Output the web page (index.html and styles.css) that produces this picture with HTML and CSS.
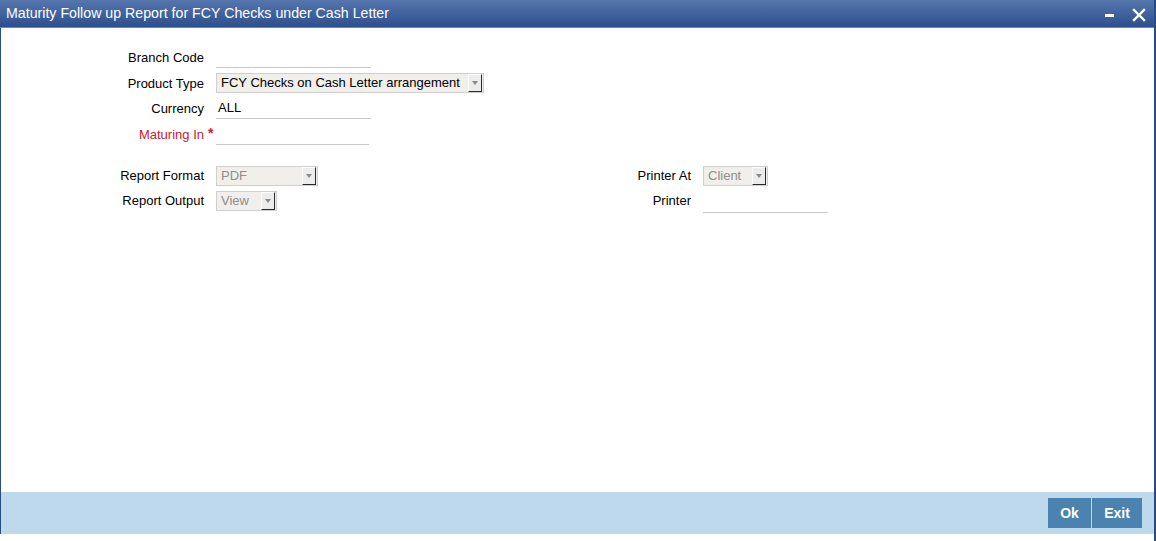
FILE: index.html
```html
<!DOCTYPE html>
<html>
<head>
<meta charset="utf-8">
<link rel="stylesheet" href="styles.css">
</head>
<body>
<div class="window">
  <div class="titlebar">
    <span class="title">Maturity Follow up Report for FCY Checks under Cash Letter</span>
    <div class="controls">
      <svg class="ctl" width="12" height="12" viewBox="0 0 12 12"><rect x="1" y="5" width="9" height="3" fill="#fff"/></svg>
      <svg class="ctl" width="14" height="14" viewBox="0 0 14 14"><path d="M2 2 L12 12 M12 2 L2 12" stroke="#fff" stroke-width="2.4" stroke-linecap="square"/></svg>
    </div>
  </div>
  <div class="content">
    <div class="form-top">
      <label class="lbl">Branch Code</label>
      <div class="field"><div class="text-input w155"></div></div>

      <label class="lbl">Product Type</label>
      <div class="field">
        <div class="select w268"><span class="sel-text">FCY Checks on Cash Letter arrangement</span><span class="arrow"><i></i></span></div>
      </div>

      <label class="lbl">Currency</label>
      <div class="field"><div class="text-input w155">ALL</div></div>

      <label class="lbl req">Maturing In<span class="star">*</span></label>
      <div class="field"><div class="text-input w153"></div></div>
    </div>

    <div class="form-bottom">
      <label class="lbl">Report Format</label>
      <div class="field">
        <div class="select disabled w102"><span class="sel-text">PDF</span><span class="arrow"><i></i></span></div>
      </div>
      <label class="lbl">Printer At</label>
      <div class="field">
        <div class="select disabled w65"><span class="sel-text">Client</span><span class="arrow"><i></i></span></div>
      </div>

      <label class="lbl">Report Output</label>
      <div class="field">
        <div class="select disabled w61"><span class="sel-text">View</span><span class="arrow"><i></i></span></div>
      </div>
      <label class="lbl">Printer</label>
      <div class="field"><div class="text-input w125"></div></div>
    </div>
  </div>
  <div class="footer">
    <button class="btn ok">Ok</button>
    <button class="btn exit">Exit</button>
  </div>
</div>
</body>
</html>
```

FILE: styles.css
```css
html, body {
  margin: 0;
  padding: 0;
  background: #ffffff;
}
body {
  font-family: "Liberation Sans", Arial, sans-serif;
  font-size: 13px;
  color: #000;
}
.window {
  width: 1156px;
  height: 541px;
  box-sizing: border-box;
  display: flex;
  flex-direction: column;
  border-right: 2px solid #2a4c86;
}
.titlebar {
  height: 27px;
  border-bottom: 1px solid #6f87ab;
  background: linear-gradient(#5676ae, #2d4f8e);
  display: flex;
  align-items: center;
  justify-content: space-between;
  padding-left: 6px;
  padding-right: 8px;
}
.title {
  color: #ffffff;
  font-size: 14.2px;
  margin-top: -1px;
}
.controls {
  display: flex;
  align-items: center;
  gap: 16px;
  margin-top: 2px;
}
.ctl { display: block; }
.content {
  flex: 1;
  border-left: 1px solid #2a4c86;
  padding-top: 19px;
}
.form-top {
  display: grid;
  grid-template-columns: 203px 300px;
  column-gap: 12px;
  row-gap: 4.5px;
  grid-auto-rows: 21px;
}
.form-bottom {
  display: grid;
  grid-template-columns: 203px 300px 163px 1fr;
  column-gap: 12px;
  grid-auto-rows: 20px;
  row-gap: 5px;
  margin-top: 21px;
}
.lbl {
  text-align: right;
  align-self: center;
  white-space: nowrap;
  line-height: 15px;
}
.lbl.req { color: #d0202b; }
.star {
  display: inline-block;
  width: 0;
  margin-left: 4px;
  margin-right: -4px;
  color: #d0202b;
  font-size: 14px;
  font-weight: bold;
  vertical-align: top;
  line-height: 13px;
}
.field {
  display: flex;
  align-items: flex-start;
}
.text-input {
  box-sizing: border-box;
  height: 21px;
  border-bottom: 1px solid #c8c8c8;
  padding-left: 2px;
  line-height: 19px;
}
.form-bottom .text-input { height: 22px; line-height: 20px; }
.w155 { width: 155px; }
.w153 { width: 153px; }
.w125 { width: 125px; }
.select {
  box-sizing: border-box;
  height: 20px;
  border: 1px solid #cfcfcf;
  background: #f0efeb;
  display: flex;
  align-items: center;
  padding-left: 4px;
  padding-right: 1px;
}
.w268 { width: 268px; }
.w102 { width: 102px; }
.w65 { width: 65px; }
.w61 { width: 61px; }
.sel-text {
  flex: 1;
  white-space: nowrap;
  overflow: hidden;
  line-height: 18px;
}
.select.disabled .sel-text { color: #8e8e8e; }
.arrow {
  box-sizing: border-box;
  width: 14px;
  height: 18px;
  flex: none;
  background: #ececec;
  border-top: 1px solid #ffffff;
  border-left: 1px solid #ffffff;
  border-right: 1px solid #2a2a2a;
  border-bottom: 1px solid #2a2a2a;
  display: flex;
  align-items: center;
  justify-content: center;
}
.arrow i {
  display: block;
  width: 0;
  height: 0;
  border-left: 3.5px solid transparent;
  border-right: 3.5px solid transparent;
  border-top: 4px solid #8a8a8a;
  margin-top: 1px;
}
.footer {
  height: 42px;
  box-sizing: border-box;
  background: #bed9ec;
  border-left: 1px solid #2a4c86;
  display: flex;
  justify-content: flex-end;
  align-items: center;
  gap: 1px;
  padding-right: 12px;
  margin-bottom: 7px;
}
.btn {
  height: 30px;
  border: none;
  background: #4a82b0;
  color: #ffffff;
  font-family: "Liberation Sans", Arial, sans-serif;
  font-size: 14px;
  font-weight: bold;
  padding: 0;
  margin: 0;
}
.btn.ok { width: 43px; }
.btn.exit { width: 50px; }
```
